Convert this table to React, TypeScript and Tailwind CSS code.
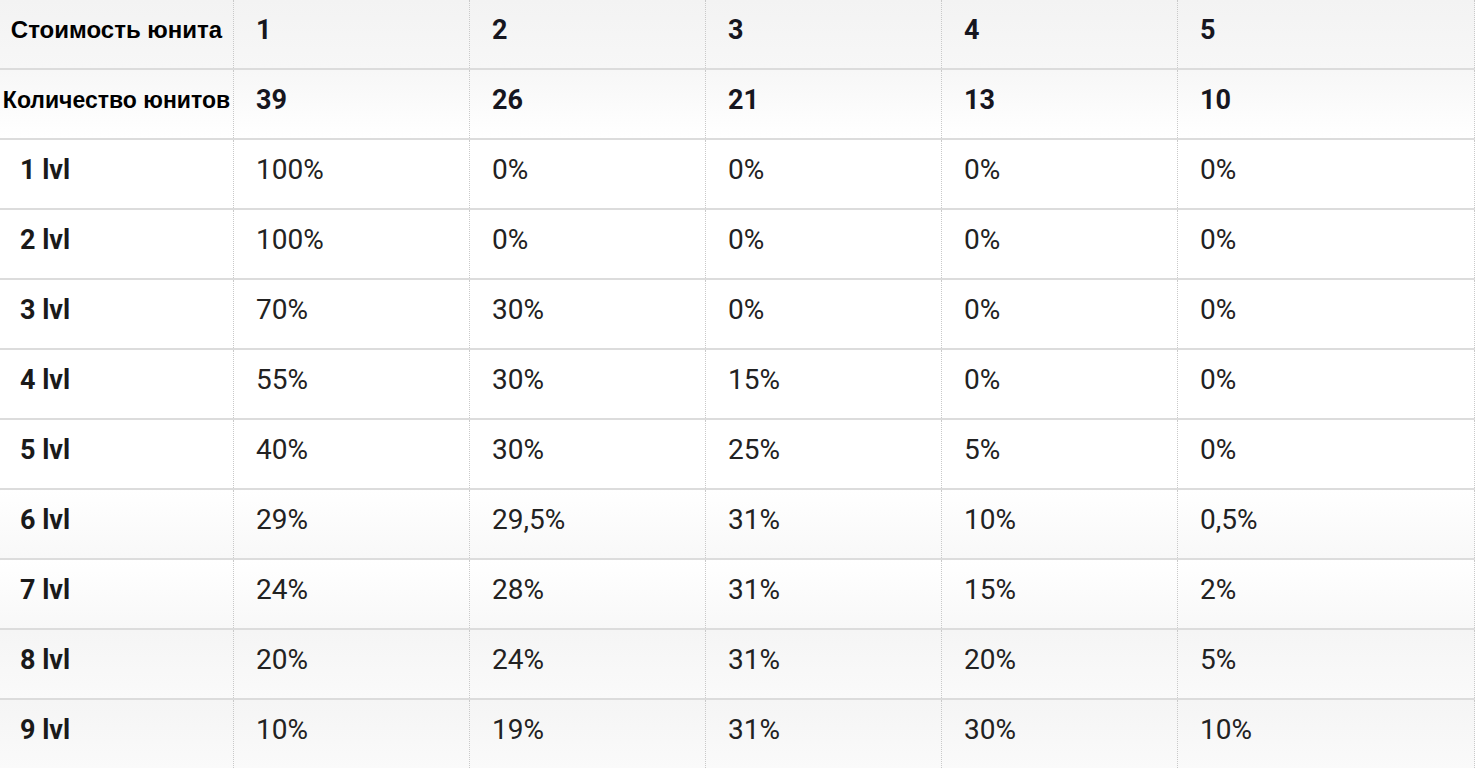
import React from 'react';

const header = ['1', '2', '3', '4', '5'];
const counts = ['39', '26', '21', '13', '10'];

const levels = [
  { name: '1 lvl', values: ['100%', '0%', '0%', '0%', '0%'] },
  { name: '2 lvl', values: ['100%', '0%', '0%', '0%', '0%'] },
  { name: '3 lvl', values: ['70%', '30%', '0%', '0%', '0%'] },
  { name: '4 lvl', values: ['55%', '30%', '15%', '0%', '0%'] },
  { name: '5 lvl', values: ['40%', '30%', '25%', '5%', '0%'] },
  { name: '6 lvl', values: ['29%', '29,5%', '31%', '10%', '0,5%'] },
  { name: '7 lvl', values: ['24%', '28%', '31%', '15%', '2%'] },
  { name: '8 lvl', values: ['20%', '24%', '31%', '20%', '5%'] },
  { name: '9 lvl', values: ['10%', '19%', '31%', '30%', '10%'] },
];

const rowGrid =
  'grid grid-cols-[234px_236px_236px_236px_236px_1fr] h-[70px] border-b-2 border-[#dcdcdc]';
const cell = 'border-r border-dotted border-[#c9c9c9] pt-[13px] leading-[34px]';

function Row({
  label,
  labelClass,
  values,
  valueClass,
  bg,
}: {
  label: string;
  labelClass: string;
  values: string[];
  valueClass: string;
  bg: string;
}) {
  return (
    <div className={`${rowGrid} ${bg}`}>
      <div className={`${cell} ${labelClass}`}>{label}</div>
      {values.map((v, i) => (
        <div key={i} className={`${cell} pl-[22px] ${valueClass}`}>
          {v}
        </div>
      ))}
    </div>
  );
}

export default function App() {
  return (
    <div className="w-[1475px] h-[768px] overflow-hidden bg-white font-['Roboto',sans-serif]">
      {/* Header rows */}
      <Row
        label="Стоимость юнита"
        labelClass="text-center font-['Liberation_Sans',Arial,sans-serif] font-bold text-[24px] text-black whitespace-nowrap"
        values={header}
        valueClass="font-bold text-[27px] text-[#16161f]"
        bg="bg-gradient-to-b from-[#f3f3f3] to-[#f7f7f7]"
      />
      <Row
        label="Количество юнитов"
        labelClass="text-center font-['Liberation_Sans',Arial,sans-serif] font-bold text-[23px] text-black whitespace-nowrap"
        values={counts}
        valueClass="font-bold text-[27px] text-[#16161f]"
        bg="bg-gradient-to-b from-[#f7f7f7] to-white"
      />

      {/* Level rows */}
      {levels.map((lvl, i) => (
        <Row
          key={lvl.name}
          label={lvl.name}
          labelClass="pl-[20px] font-bold text-[27px] text-[#1a1a1a]"
          values={lvl.values}
          valueClass="text-[28px] leading-[33px] text-[#222222]"
          bg={
            i < 5
              ? 'bg-white'
              : i < 7
                ? 'bg-gradient-to-b from-white to-[#f8f8f8]'
                : 'bg-gradient-to-b from-[#f5f5f5] to-[#fafafa]'
          }
        />
      ))}
    </div>
  );
}
